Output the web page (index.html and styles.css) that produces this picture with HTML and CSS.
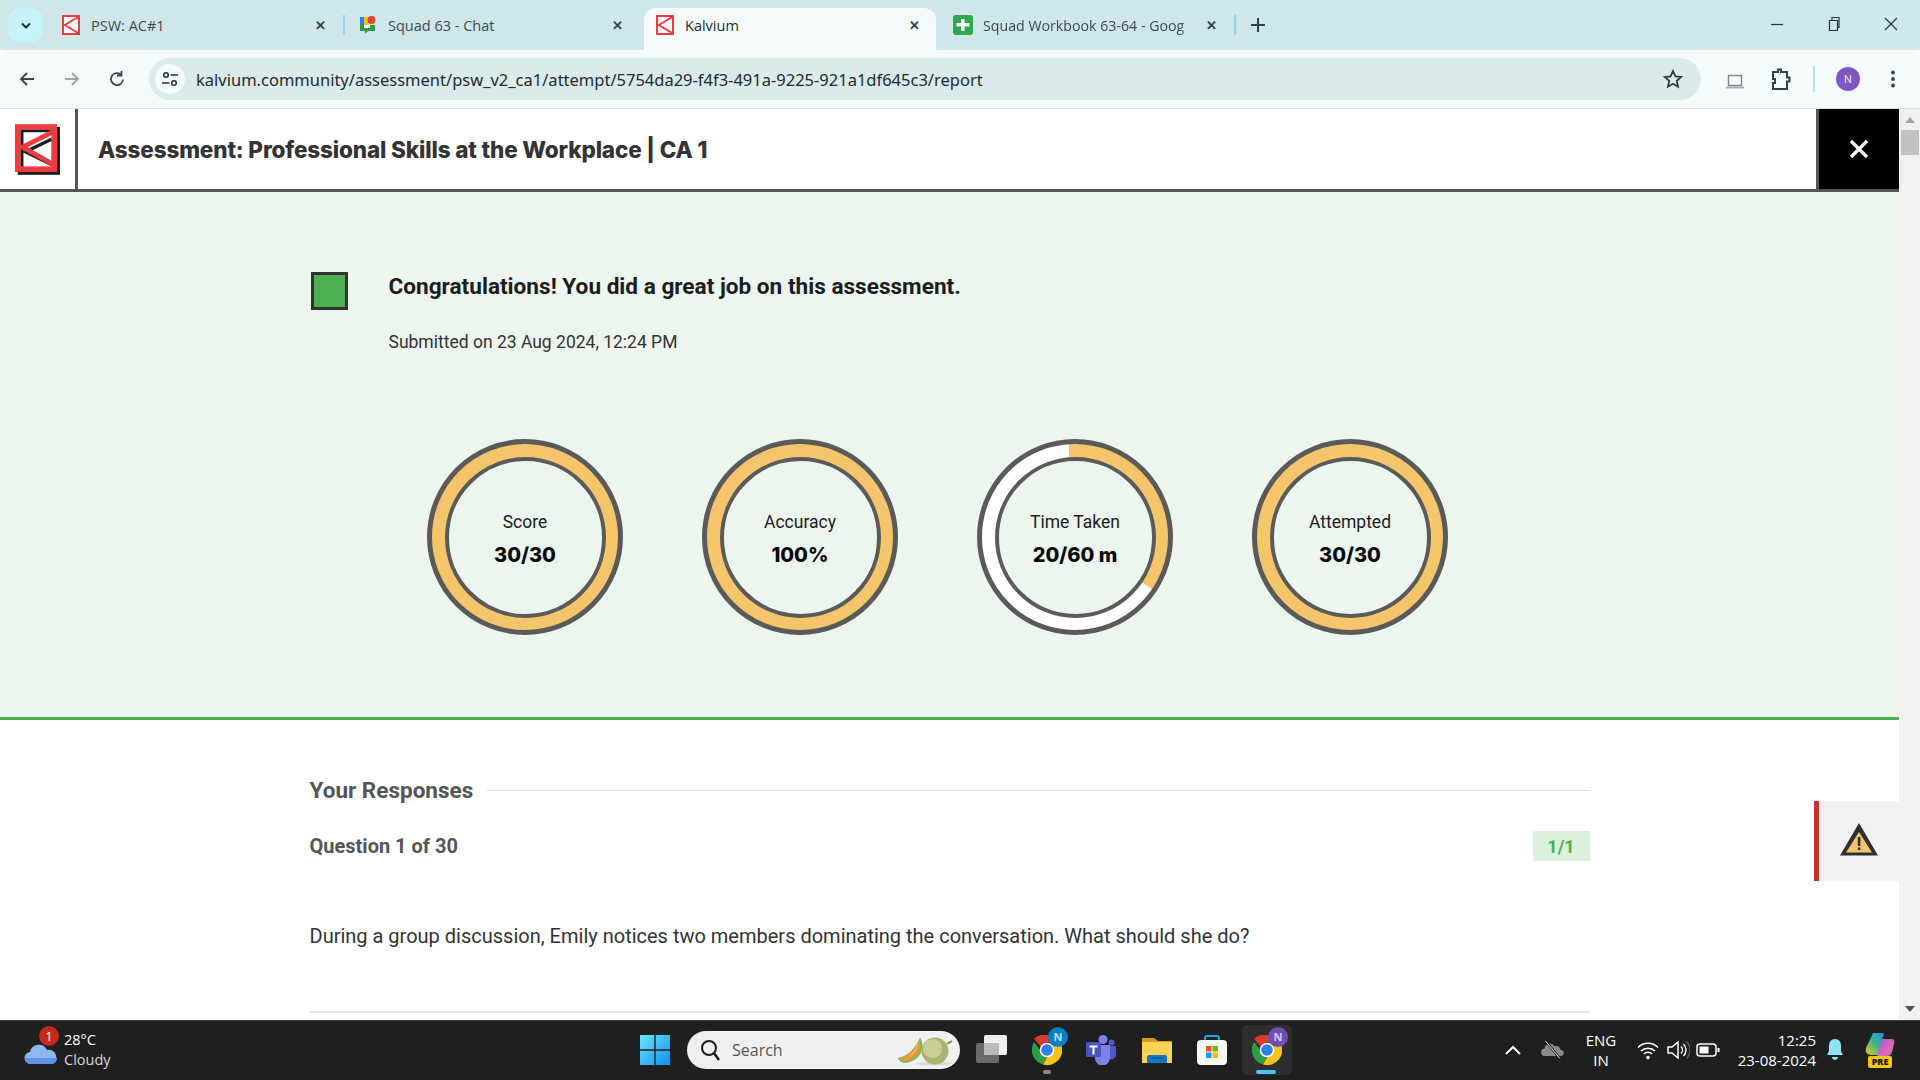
FILE: index.html
```html
<!DOCTYPE html>
<html lang="en">
<head>
<meta charset="utf-8">
<title>Kalvium</title>
<link rel="stylesheet" href="styles.css">
</head>
<body>
<svg class="defs" width="0" height="0" aria-hidden="true">
  <symbol id="kfav" viewBox="0 0 18 20">
    <rect x="1" y="1" width="16" height="18" fill="#fff" stroke="#ee3b3f" stroke-width="2"/>
    <path d="M16 2 3 10l13 8" fill="none" stroke="#ee3b3f" stroke-width="2"/>
  </symbol>
  <symbol id="chrome" viewBox="0 0 30 30">
    <path d="M15 0a15 15 0 0 1 13 7.500H15a7.500 7.500 0 0 0-6.500 3.750L2 3.800A15 15 0 0 1 15 0z" fill="#db3a2f" transform="translate(0 0)"/>
    <path d="M2.200 7A15 15 0 0 0 11 29.500l6.500-11.300a7.500 7.500 0 0 1-9-2.700z" fill="#2e9c49"/>
    <path d="M28.200 7.500A15 15 0 0 1 11 29.500l6.500-11.300a7.500 7.500 0 0 0 3-10.700z" fill="#f6c21c"/>
    <circle cx="15" cy="15" r="7.300" fill="#fff"/>
    <circle cx="15" cy="15" r="5.800" fill="#2f7fe8"/>
  </symbol>
</svg>

<div class="tabstrip">
  <button class="tab-search" type="button">
    <svg width="12" height="8" viewBox="0 0 12 8"><path d="M2 1.500 6 5.500l4-4" fill="none" stroke="#20302f" stroke-width="2"/></svg>
  </button>
  <div class="tab">
    <svg class="favicon" viewBox="0 0 18 20"><use href="#kfav"/></svg>
    <span class="tab-title">PSW: AC#1</span>
    <span class="tab-close">✕</span>
  </div>
  <span class="tab-sep"></span>
  <div class="tab">
    <svg class="favicon" viewBox="0 0 18 20">
      <path d="M1 2h9v10H1z" fill="#f6c21c"/><path d="M1 2h4v10H1z" fill="#2f7fe8"/><circle cx="12.500" cy="5" r="4" fill="#e0473a"/><path d="M1 10h15v6H9l-3 3v-3H1z" fill="#2e9c49"/><path d="M5 10h6v3H5z" fill="#fff"/>
    </svg>
    <span class="tab-title">Squad 63 - Chat</span>
    <span class="tab-close">✕</span>
  </div>
  <span class="tab-gap"></span>
  <div class="tab tab-active">
    <svg class="favicon" viewBox="0 0 18 20"><use href="#kfav"/></svg>
    <span class="tab-title tab-title-dark">Kalvium</span>
    <span class="tab-close">✕</span>
  </div>
  <span class="tab-gap"></span>
  <div class="tab">
    <svg class="favicon favicon-sheet" viewBox="0 0 20 20">
      <rect width="20" height="20" rx="3" fill="#2fa84f"/><path d="M3.500 8h13v3.500h-13z" fill="#fff"/><path d="M8 4h3.500v12H8z" fill="#fff"/>
    </svg>
    <span class="tab-title tab-title-fade">Squad Workbook 63-64 - Goog</span>
    <span class="tab-close">✕</span>
  </div>
  <span class="tab-sep"></span>
  <svg class="newtab" width="16" height="16" viewBox="0 0 16 16"><path d="M8 1v14M1 8h14" stroke="#2f4347" stroke-width="2"/></svg>
  <div class="winctl">
    <svg width="14" height="14" viewBox="0 0 14 14"><path d="M1 7.500h12" stroke="#26383c" stroke-width="1.200"/></svg>
    <svg width="14" height="16" viewBox="0 0 14 16"><path d="M2.500 4.500h8v10h-8zM5 4V1.500h7v10h-1.500" fill="none" stroke="#26383c" stroke-width="1.200"/></svg>
    <svg width="14" height="14" viewBox="0 0 14 14"><path d="M1 1l12 12M13 1 1 13" stroke="#26383c" stroke-width="1.200"/></svg>
  </div>
</div>

<div class="toolbar">
  <svg class="nav nav-first" viewBox="0 0 18 18"><path d="M16 9H3M9 3 3 9l6 6" fill="none" stroke="#33474b" stroke-width="1.800"/></svg>
  <svg class="nav" viewBox="0 0 18 18"><path d="M2 9h13M9 3l6 6-6 6" fill="none" stroke="#98a6a9" stroke-width="1.800"/></svg>
  <svg class="nav" viewBox="0 0 18 18"><path d="M15 9.500A6 6 0 1 1 13 4.600M13.500 1v4.500H9" fill="none" stroke="#33474b" stroke-width="1.800"/></svg>
  <div class="omnibox">
    <span class="site-btn">
      <svg width="18" height="18" viewBox="0 0 18 18"><circle cx="5" cy="5" r="2.300" fill="none" stroke="#22302f" stroke-width="1.500"/><path d="M9.500 5H17M1 13h7.500" stroke="#22302f" stroke-width="1.700"/><circle cx="13" cy="13" r="2.300" fill="none" stroke="#22302f" stroke-width="1.500"/></svg>
    </span>
    <span class="url">kalvium.community/assessment/psw_v2_ca1/attempt/5754da29-f4f3-491a-9225-921a1df645c3/report</span>
    <svg class="star" width="20" height="20" viewBox="0 0 20 20"><path d="m10 2 2.400 5.400 5.800.6-4.400 3.900 1.300 5.800L10 14.700l-5.100 3 1.300-5.800L1.800 8l5.800-.6z" fill="none" stroke="#2d3f42" stroke-width="1.800"/></svg>
  </div>
  <svg class="tool-laptop" width="20" height="16" viewBox="0 0 20 16"><path d="M3.500 2.500h13v10h-13z" fill="none" stroke="#7d8a8c" stroke-width="1.400"/><path d="M1 13.500h18v2H1z" fill="#a6b0b2"/></svg>
  <svg class="tool-puzzle" width="20" height="24" viewBox="0 0 20 24"><path d="M2 5h5V2.500h3V5h6v5.500h2.500v4H16V22H2v-6h2v-4H2z" fill="none" stroke="#2f4347" stroke-width="2"/></svg>
  <span class="tool-sep"></span>
  <span class="avatar">N</span>
  <svg class="tool-dots" width="6" height="20" viewBox="0 0 6 20"><circle cx="3" cy="3.500" r="1.900" fill="#2f4347"/><circle cx="3" cy="10" r="1.900" fill="#2f4347"/><circle cx="3" cy="16.500" r="1.900" fill="#2f4347"/></svg>
</div>

<div class="viewport">
  <main class="page">
    <header class="page-head">
      <div class="logo-cell">
        <svg width="45" height="51" viewBox="0 0 48 54">
          <rect x="3" y="3" width="45" height="51" fill="#1c1c1c"/>
          <rect width="45" height="51" fill="#ee3b3f"/>
          <rect x="6" y="6" width="33" height="39" fill="#fff"/>
          <path d="M6 6h33v2.500H9V45H6z" fill="#1c1c1c"/>
          <path d="M39 13.500 11 27l28 13.500" fill="none" stroke="#1c1c1c" stroke-width="3.500" transform="translate(0 2.500)"/>
          <path d="M41 8 8 24.500 41 43" fill="none" stroke="#ee3b3f" stroke-width="5"/>
          <path d="M39 6h6v39h-6z" fill="#ee3b3f"/>
        </svg>
      </div>
      <h1 class="page-title">Assessment: Professional Skills at the Workplace | CA 1</h1>
      <div class="close-cell">
        <svg width="20" height="20" viewBox="0 0 20 20"><path d="M2 2l16 16M18 2 2 18" stroke="#fff" stroke-width="3.200"/></svg>
      </div>
    </header>

    <section class="summary">
      <div class="container">
        <div class="congrats">
          <span class="status-box"></span>
          <div>
            <h2 class="congrats-title">Congratulations! You did a great job on this assessment.</h2>
            <p class="congrats-date">Submitted on 23 Aug 2024, 12:24 PM</p>
          </div>
        </div>
        <div class="rings">
          <div class="ring">
            <div class="ring-inner"><span class="ring-label">Score</span><span class="ring-value">30/30</span></div>
          </div>
          <div class="ring">
            <div class="ring-inner"><span class="ring-label">Accuracy</span><span class="ring-value">100%</span></div>
          </div>
          <div class="ring ring-time">
            <div class="ring-inner"><span class="ring-label">Time Taken</span><span class="ring-value">20/60 m</span></div>
          </div>
          <div class="ring">
            <div class="ring-inner"><span class="ring-label">Attempted</span><span class="ring-value">30/30</span></div>
          </div>
        </div>
      </div>
    </section>

    <section class="responses">
      <div class="container">
        <div class="resp-head">
          <h3 class="resp-title">Your Responses</h3>
          <span class="resp-line"></span>
        </div>
        <div class="q-row">
          <span class="q-num">Question 1 of 30</span>
          <span class="q-badge">1/1</span>
        </div>
        <p class="q-text">During a group discussion, Emily notices two members dominating the conversation. What should she do?</p>
        <div class="q-rule"></div>
      </div>
    </section>

    <aside class="report-tab">
      <svg width="40" height="34" viewBox="0 0 40 34"><path d="M20 1 39 33.500H1z" fill="#2f2f2f"/><path d="M20 10 33 30.500H7z" fill="#f4c56a"/><path d="M18.800 15h2.600v9h-2.600zM18.800 25.500h2.600V28h-2.600z" fill="#2f2f2f"/></svg>
    </aside>
  </main>
  <div class="scrollbar">
    <span class="arrow-up"></span>
    <span class="thumb"></span>
    <span class="arrow-down"></span>
  </div>
</div>

<footer class="taskbar">
  <div class="weather">
    <span class="weather-icon">
      <svg width="34" height="24" viewBox="0 0 34 24"><path d="M7 23a6 6 0 0 1-1-12 9 9 0 0 1 17-2 7 7 0 0 1 4 14z" fill="#8db7f0"/><path d="M1 17h32c0 4-3 6-6 6H7c-3 0-6-2-6-6z" fill="#5f92e6"/></svg>
      <span class="weather-badge">1</span>
    </span>
    <div class="weather-text"><span>28°C</span><span class="weather-sub">Cloudy</span></div>
  </div>

  <div class="tb-center">
    <svg class="win" width="30" height="30" viewBox="0 0 30 30">
      <defs><linearGradient id="wg" x1="0" y1="0" x2="1" y2="1"><stop offset="0" stop-color="#6fe3fb"/><stop offset="1" stop-color="#0f90f2"/></linearGradient></defs>
      <path d="M0 0h14.300v14.300H0zM15.700 0H30v14.300H15.700zM0 15.700h14.300V30H0zM15.700 15.700H30V30H15.700z" fill="url(#wg)"/>
    </svg>
    <div class="search">
      <svg width="22" height="24" viewBox="0 0 22 24"><circle cx="10" cy="10" r="7" fill="none" stroke="#1a1a1a" stroke-width="2"/><path d="m15 15 5 7" stroke="#1a1a1a" stroke-width="2.400"/></svg>
      <span class="search-text">Search</span>
      <svg class="melon" width="58" height="32" viewBox="0 0 58 32">
        <ellipse cx="38" cy="29.500" rx="18" ry="1.800" fill="#d8d8d8"/>
        <circle cx="39" cy="17" r="13.500" fill="#a9b26e"/>
        <circle cx="36.500" cy="14.500" r="9.500" fill="#c9cf95"/>
        <path d="M51 10l5-3" stroke="#5f9a3a" stroke-width="2"/>
        <path d="M24 3C29 12 27 26 10 29 6 29 3 27 2 24 12 22 20 14 24 3z" fill="#86b55a"/>
        <path d="M23 6C26 14 23 24 9 27 7 27 5 26 4 24.500 13 22 20 15 23 6z" fill="#f0963a"/>
        <path d="M22 9C22 14 19 19 13 23 17 19 20 14 22 9z" fill="#f9c27a"/>
      </svg>
    </div>
    <div class="tb-slot">
      <svg width="31" height="30" viewBox="0 0 31 30"><rect x="8" y="0" width="23" height="20" rx="2" fill="#efefef"/><rect y="8" width="23" height="20" rx="2" fill="#6a6a6a"/><rect x="8" y="8" width="15" height="12" fill="#b9b9b9"/></svg>
    </div>
    <div class="tb-slot tb-slot-pin">
      <svg class="chrome" viewBox="0 0 30 30"><use href="#chrome"/></svg>
      <span class="pbadge pbadge-blue">N</span>
      <span class="run-dot"></span>
    </div>
    <div class="tb-slot">
      <svg width="31" height="30" viewBox="0 0 31 30">
        <circle cx="17" cy="4.500" r="4.500" fill="#7b83eb"/><circle cx="25.500" cy="7.500" r="3" fill="#5059c9"/>
        <path d="M21 11h9v9a5 5 0 0 1-9 2z" fill="#5059c9"/>
        <path d="M9 10h15v13a7.500 7.500 0 0 1-15 0z" fill="#7b83eb"/>
        <rect y="7" width="15" height="15" rx="1.500" fill="#4b53bc"/>
        <path d="M3.500 10.500h8v2H8.500v7h-2v-7h-3z" fill="#fff"/>
      </svg>
    </div>
    <div class="tb-slot">
      <svg width="30" height="28" viewBox="0 0 30 28"><path d="M0 2h12l4 3h14v4H0z" fill="#d79a12"/><path d="M0 6h30v21H0z" fill="#fcd353"/><path d="M5 27v-6c0-1 1-2 2-2h16c1 0 2 1 2 2v6z" fill="#1477c4"/><path d="M9 22h12" stroke="#0d4f8c" stroke-width="1.300"/></svg>
    </div>
    <div class="tb-slot">
      <svg width="30" height="30" viewBox="0 0 30 30">
        <path d="M8 7V3c0-1 1-2 2-2h10c1 0 2 1 2 2v4" fill="none" stroke="#1aa5e8" stroke-width="2"/>
        <rect y="5" width="30" height="25" rx="4" fill="#f7f7f7"/>
        <path d="M9 11h5.500v5.500H9z" fill="#f04e23"/><path d="M15.500 11H21v5.500h-5.500z" fill="#7eb900"/><path d="M9 17.500h5.500V23H9z" fill="#00a3ee"/><path d="M15.500 17.500H21V23h-5.500z" fill="#fdb900"/>
      </svg>
    </div>
    <div class="tb-slot tb-slot-pin">
      <span class="active-tile"></span>
      <svg class="chrome" viewBox="0 0 30 30"><use href="#chrome"/></svg>
      <span class="pbadge pbadge-purple">N</span>
      <span class="run-bar"></span>
    </div>
  </div>

  <div class="tray">
    <svg class="tray-chev" width="30" height="12" viewBox="0 0 30 12"><path d="m8 10 7-7 7 7" fill="none" stroke="#fff" stroke-width="2"/></svg>
    <svg class="tray-cloud" width="40" height="26" viewBox="-6 -4 52 34"><path d="M10 21a5 5 0 0 1-1-10 7 7 0 0 1 13-3 6 6 0 0 1 8 5 4 4 0 0 1 0 8z" fill="#8a8a8a"/><path d="m11 2 18 22" stroke="#1f1f1f" stroke-width="3"/><path d="m10 1 19 23" stroke="#dcdcdc" stroke-width="1.300"/></svg>
    <div class="tray-lang"><span>ENG</span><span>IN</span></div>
    <svg class="tray-wifi" width="24" height="20" viewBox="0 0 24 20"><path d="M2 7.500a14 14 0 0 1 20 0M5 11a10 10 0 0 1 14 0M8 14a5.500 5.500 0 0 1 8 0" fill="none" stroke="#fff" stroke-width="1.500"/><circle cx="12" cy="17.500" r="1.800" fill="#fff"/></svg>
    <svg class="tray-vol" width="24" height="22" viewBox="0 0 24 22"><path d="M2 8h4l6-5v16l-6-5H2z" fill="none" stroke="#fff" stroke-width="1.500"/><path d="M15 7.500a5 5 0 0 1 0 7M17.500 5a8.500 8.500 0 0 1 0 12" fill="none" stroke="#fff" stroke-width="1.400"/><path d="M20.500 2.500a12 12 0 0 1 0 17" fill="none" stroke="#666" stroke-width="1.200"/></svg>
    <svg class="tray-batt" width="24" height="14" viewBox="0 0 24 14"><rect x="1" y="1" width="19" height="12" rx="3" fill="none" stroke="#fff" stroke-width="1.500"/><path d="M3.500 3.500h9v7h-9z" fill="#fff"/><path d="M21.500 5h2v4h-2z" fill="#fff"/></svg>
    <div class="tray-clock"><span>12:25</span><span>23-08-2024</span></div>
    <svg class="tray-bell" width="24" height="22" viewBox="0 0 24 22"><path d="M12 0c4 0 6 3 6 7v5l2 4H4l2-4V7c0-4 2-7 6-7z" fill="#8fe3f7"/><path d="M9 18h6c0 2-1.500 3-3 3s-3-1-3-3z" fill="#8fe3f7"/></svg>
    <div class="tray-copilot">
      <svg width="30" height="26" viewBox="0 0 30 26">
        <defs>
          <linearGradient id="cp1" x1="0" y1="1" x2="1" y2="0"><stop offset="0" stop-color="#f5c518"/><stop offset=".5" stop-color="#3fb58a"/><stop offset="1" stop-color="#1f8fe8"/></linearGradient>
          <linearGradient id="cp2" x1="0" y1="0" x2="1" y2="1"><stop offset="0" stop-color="#b04fe0"/><stop offset="1" stop-color="#f07a9a"/></linearGradient>
        </defs>
        <path d="M8 1h11l-6 22H6C2 23 0 20 1 16z" fill="url(#cp1)"/>
        <path d="M17 7h9c3 0 4 2 3 5l-2 8c-1 3-3 4-6 4H12z" fill="url(#cp2)"/>
      </svg>
      <span class="pre">PRE</span>
    </div>
  </div>
</footer>
</body>
</html>
```
FILE: styles.css
```css
* { box-sizing: border-box; }
html, body { margin: 0; height: 100%; overflow: hidden; }
body {
  display: flex;
  flex-direction: column;
  width: 1920px;
  height: 1080px;
  font-family: Roboto, "Liberation Sans", sans-serif;
  color: #333;
  background: #fff;
}
h1, h2, h3, p { margin: 0; }
.defs { position: absolute; }

/* tab strip */
.tabstrip {
  flex: 0 0 50px;
  display: flex;
  align-items: flex-end;
  padding-left: 8px;
  background: #cfe6ea;
  font-family: "Open Sans", "Noto Sans", sans-serif;
  font-size: 14.5px;
}
.tab-search {
  flex: 0 0 35px;
  height: 34px;
  margin: 0 7px 8px 0;
  padding: 0;
  border: 0;
  border-radius: 12px;
  background: #c7f3fa;
}
.tab {
  flex: 0 0 292px;
  min-width: 0;
  height: 42px;
  display: flex;
  align-items: center;
  padding: 0 12px 8px;
  border-radius: 12px 12px 0 0;
}
.tab-active { background: #f5fafa; }
.favicon { width: 18px; height: 20px; flex: none; }
.favicon-sheet { width: 20px; }
.tab-title {
  flex: 1;
  min-width: 0;
  margin-left: 11px;
  color: #3b4a4d;
  white-space: nowrap;
}
.tab-title-dark { color: #1f2a2c; }
.tab-title-fade {
  margin-left: 10px;
  font-size: 14.2px;
  -webkit-mask-image: linear-gradient(90deg, #000 90%, transparent);
  mask-image: linear-gradient(90deg, #000 90%, transparent);
}
.tab-close {
  flex: 0 0 20px;
  text-align: center;
  font-size: 13px;
  font-weight: 700;
  color: #2f4347;
}
.tab-sep, .tab-gap {
  flex: 0 0 5px;
  height: 20px;
  margin-bottom: 15px;
  display: block;
}
.tab-sep { border-left: 2px solid #8fd6e2; margin-left: 1px; margin-right: -1px; }
.newtab { margin: 0 0 17px 12px; }
.winctl {
  margin-left: auto;
  display: flex;
  align-items: center;
  gap: 43px;
  padding: 0 22px 18px 0;
  align-self: flex-end;
}

/* toolbar */
.toolbar {
  flex: 0 0 59px;
  display: flex;
  align-items: center;
  background: #f5fafa;
  border-bottom: 1px solid #d6e3e6;
  border-radius: 10px 10px 0 0;
}
.nav { width: 18px; height: 18px; flex: none; margin-left: 27px; }
.nav-first { margin-left: 18px; }
.omnibox {
  flex: 0 0 1552px;
  height: 42px;
  margin-left: 23px;
  display: flex;
  align-items: center;
  padding: 0 18px 0 6px;
  border-radius: 21px;
  background: #daebec;
}
.site-btn {
  width: 30px;
  height: 30px;
  flex: none;
  display: flex;
  align-items: center;
  justify-content: center;
  border-radius: 50%;
  background: #f5fafa;
}
.url {
  flex: 1;
  margin-left: 11px;
  font-family: "Noto Sans", "Open Sans", sans-serif;
  font-size: 16.5px;
  color: #1f2a2c;
  white-space: nowrap;
}
.star { flex: none; }
.tool-laptop { margin: 4px 0 0 24px; }
.tool-puzzle { margin-left: 26px; }
.tool-sep { width: 2px; height: 26px; margin-left: 22px; background: #b6e4ec; }
.avatar {
  width: 24px;
  height: 24px;
  margin-left: 21px;
  display: flex;
  align-items: center;
  justify-content: center;
  border-radius: 50%;
  background: #7e57c2;
  color: #e8def8;
  font-size: 11px;
}
.tool-dots { margin-left: 30px; }

/* page */
.viewport { flex: 1; display: flex; min-height: 0; }
.page { position: relative; flex: 0 0 1899px; overflow: hidden; background: #fff; }
.scrollbar {
  flex: 0 0 21px;
  display: flex;
  flex-direction: column;
  align-items: center;
  padding-top: 8px;
  background: #f1f1f1;
}
.arrow-up { width: 0; height: 0; border: 5px solid transparent; border-top: 0; border-bottom: 6px solid #a3a3a3; }
.thumb { width: 18px; height: 25px; margin-top: 7px; background: #c1c1c1; }
.arrow-down { width: 0; height: 0; margin-top: auto; margin-bottom: 8px; border: 5px solid transparent; border-bottom: 0; border-top: 6px solid #505050; }

.page-head {
  height: 83px;
  display: flex;
  align-items: stretch;
  border-bottom: 3px solid #555;
}
.logo-cell {
  flex: 0 0 78px;
  display: flex;
  align-items: center;
  padding-left: 15px;
  border-right: 3px solid #555;
}
.page-title {
  flex: 1;
  align-self: center;
  padding: 1px 0 0 20px;
  font-family: Inter, Roboto, sans-serif;
  font-size: 22.5px;
  font-weight: 800;
  color: #333;
  letter-spacing: -0.15px;
}
.close-cell {
  flex: 0 0 83px;
  display: flex;
  align-items: center;
  justify-content: center;
  background: #000;
  border-left: 3px solid #555;
}

.container { width: 1280px; margin: 0 auto; }
.summary {
  height: 528px;
  padding-top: 80px;
  background: #ecf6ee;
  border-bottom: 3px solid #4caf50;
}
.congrats { display: flex; gap: 41px; padding-left: 1px; }
.status-box {
  flex: 0 0 37px;
  height: 38px;
  background: #4caf50;
  border: 3px solid #333;
}
.congrats-title { font-size: 22.6px; line-height: 30px; font-weight: 700; color: #1c1c1c; }
.congrats-date { margin-top: 27px; font-size: 17.5px; line-height: 26px; color: #333; }

.rings { display: flex; gap: 79px; margin-top: 84px; padding-left: 117.5px; }
.ring {
  flex: 0 0 196px;
  height: 196px;
  display: flex;
  align-items: center;
  justify-content: center;
  border: 5px solid #5a5a5a;
  border-radius: 50%;
  background: #f4c56a;
}
.ring-time { background: conic-gradient(from -4deg, #f4c56a 0 128deg, #fff 128deg 360deg); }
.ring-inner {
  width: 161px;
  height: 161px;
  display: flex;
  flex-direction: column;
  align-items: center;
  justify-content: center;
  gap: 7px;
  padding-top: 5px;
  border: 4px solid #5a5a5a;
  border-radius: 50%;
  background: #ecf6ee;
}
.ring-label { font-size: 17.5px; line-height: 24px; font-weight: 400; color: #1c1c1c; }
.ring-value { font-family: Inter, Roboto, sans-serif; font-size: 20px; line-height: 28px; font-weight: 800; color: #0a0a0a; }

.responses { padding-top: 55px; }
.resp-head { display: flex; align-items: center; gap: 14px; }
.resp-title { font-size: 22.5px; line-height: 30px; font-weight: 700; color: #555; }
.resp-line { flex: 1; height: 1px; background: #dcdcdc; }
.q-row { display: flex; align-items: center; justify-content: space-between; margin-top: 26px; }
.q-num { font-size: 20px; font-weight: 700; color: #555; }
.q-badge {
  width: 57px;
  height: 30px;
  display: flex;
  align-items: center;
  justify-content: center;
  background: #dcf0de;
  color: #4caf50;
  font-size: 18px;
  font-weight: 700;
}
.q-text { margin-top: 60px; font-size: 20px; line-height: 30px; color: #333; }
.q-rule { height: 2px; margin-top: 60px; background: #e4e4e4; }

.report-tab {
  position: absolute;
  right: 0;
  top: 692px;
  width: 85px;
  height: 80px;
  display: flex;
  align-items: flex-start;
  justify-content: center;
  padding-top: 21px;
  background: #f1f1f1;
  border-left: 5px solid #c9302c;
}

/* taskbar */
.taskbar {
  flex: 0 0 60px;
  display: flex;
  align-items: center;
  padding-bottom: 2px;
  background: #1f1f1f;
  border-top: 1px solid #3a3a3a;
  font-family: "Open Sans", "Noto Sans", sans-serif;
  font-size: 15px;
  color: #fff;
}
.weather { flex: 0 0 640px; display: flex; align-items: center; padding-left: 24px; }
.weather-icon { position: relative; width: 40px; height: 30px; display: flex; align-items: flex-end; }
.weather-badge {
  position: absolute;
  left: 15px;
  top: -9px;
  width: 20px;
  height: 20px;
  border-radius: 50%;
  background: #c42b1c;
  text-align: center;
  font-size: 13px;
  line-height: 20px;
}
.weather-text { display: flex; flex-direction: column; font-size: 14.5px; line-height: 20px; }
.weather-sub { color: #d8d8d8; }

.tb-center { display: flex; align-items: center; }
.win { flex: none; }
.search {
  flex: 0 0 273px;
  height: 38px;
  margin-left: 17px;
  display: flex;
  align-items: center;
  padding: 0 6px 0 12px;
  border-radius: 19px;
  background: #f0f0f0;
}
.search-text { margin-left: 11px; font-size: 16px; color: #555; }
.melon { margin-left: auto; }
.tb-slot {
  position: relative;
  flex: 0 0 55px;
  height: 50px;
  display: flex;
  align-items: center;
  justify-content: center;
}
.search + .tb-slot { margin-left: 4px; }
.chrome { position: relative; width: 30px; height: 30px; }
.pbadge {
  position: absolute;
  left: 29px;
  top: 2px;
  width: 20px;
  height: 20px;
  border-radius: 50%;
  text-align: center;
  font-size: 11px;
  font-weight: 700;
  line-height: 20px;
}
.pbadge-blue { background: #0b7fc4; color: #bfe6ff; }
.pbadge-purple { background: #6f4db5; color: #d9cdf5; }
.run-dot {
  position: absolute;
  left: 24px;
  bottom: 1px;
  width: 8px;
  height: 4px;
  border-radius: 2px;
  background: #8a8a8a;
}
.active-tile {
  position: absolute;
  left: 3px;
  top: 0;
  width: 50px;
  height: 50px;
  border-radius: 5px;
  background: #2e2e2e;
}
.run-bar {
  position: absolute;
  left: 17px;
  bottom: 1px;
  width: 20px;
  height: 4px;
  border-radius: 2px;
  background: #4cc2ff;
}

.tray { margin-left: auto; display: flex; align-items: center; padding-right: 22px; }
.tray-cloud { margin-left: 5px; }
.tray-lang {
  flex: 0 0 48px;
  margin-left: 4px;
  display: flex;
  flex-direction: column;
  align-items: center;
  line-height: 20px;
}
.tray-wifi { margin-left: 11px; }
.tray-vol { margin-left: 6px; }
.tray-batt { margin-left: 6px; }
.tray-clock {
  flex: 0 0 90px;
  margin-left: 6px;
  display: flex;
  flex-direction: column;
  align-items: flex-end;
  line-height: 20px;
}
.tray-bell { margin-left: 7px; }
.tray-copilot {
  position: relative;
  flex: 0 0 36px;
  height: 36px;
  margin-left: 15px;
  display: flex;
  justify-content: center;
}
.pre {
  position: absolute;
  left: 6px;
  bottom: 0;
  width: 24px;
  height: 12px;
  border-radius: 2px;
  background: #f5c518;
  color: #1a1a1a;
  text-align: center;
  font-size: 9px;
  font-weight: 800;
  line-height: 12px;
}
```
